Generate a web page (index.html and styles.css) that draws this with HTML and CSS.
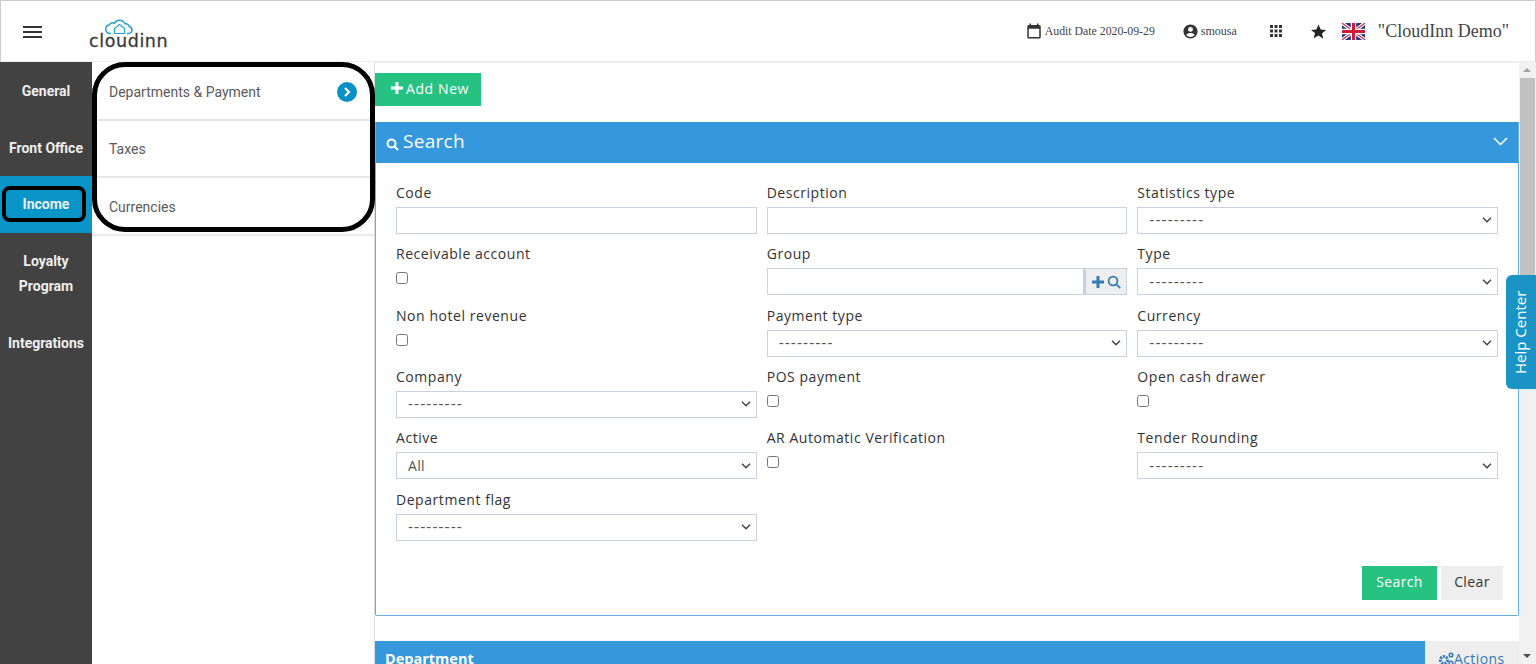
FILE: index.html
```html
<!DOCTYPE html>
<html>
    <head>
        <meta charset="utf-8">
        <title>CloudInn</title>
        <link rel="stylesheet" href="styles.css">
    </head>
    <body>
        <header class="topbar">
            <div class="menu-btn"><span></span><span></span><span></span></div>
            <div class="logo">
                <svg class="logo-cloud" width="29" height="16" viewBox="0 0 29 16" fill="none" stroke="#2a9fd6" stroke-width="1.5">
                    <path d="M6 14.500H5a4.300 4.300 0 0 1-.8-8.500 4 4 0 0 1 5.300-1.800A5.800 5.800 0 0 1 20 4.800a4 4 0 0 1 4.200 2.600 3.600 3.600 0 0 1-.7 7.100H22"/>
                    <path d="M9.500 9.500l5-4 5 4v5h-10z" stroke-width="1.200"/>
                </svg>
                <span class="logo-text">cloudinn</span>
            </div>
            <div class="top-right">
                <svg class="ico-cal" width="18" height="18" viewBox="0 0 24 24" fill="#333"><path d="M19 4h-1V2h-2v2H8V2H6v2H5a2 2 0 0 0-2 2v14a2 2 0 0 0 2 2h14a2 2 0 0 0 2-2V6a2 2 0 0 0-2-2zm0 16H5V9h14v11z"/></svg>
                <span class="audit">Audit Date 2020-09-29</span>
                <svg class="ico-user" width="17" height="17" viewBox="0 0 24 24" fill="#333"><path d="M12 2a10 10 0 1 0 0 20 10 10 0 0 0 0-20zm0 3.500a3.500 3.500 0 1 1 0 7 3.500 3.500 0 0 1 0-7zm0 14.200a7.700 7.700 0 0 1-6-2.900c1-1.700 3.900-2.600 6-2.600s5 .9 6 2.600a7.700 7.700 0 0 1-6 2.900z"/></svg>
                <span class="user">smousa</span>
                <svg class="ico-grid" width="12" height="12" viewBox="0 0 12 12" fill="#333">
                    <rect x="0" y="0" width="3" height="3"/><rect x="4.500" y="0" width="3" height="3"/><rect x="9" y="0" width="3" height="3"/>
                    <rect x="0" y="4.500" width="3" height="3"/><rect x="4.500" y="4.500" width="3" height="3"/><rect x="9" y="4.500" width="3" height="3"/>
                    <rect x="0" y="9" width="3" height="3"/><rect x="4.500" y="9" width="3" height="3"/><rect x="9" y="9" width="3" height="3"/>
                </svg>
                <svg class="ico-star" width="15" height="15" viewBox="0 0 24 24" fill="#222"><path d="M12 .8l3.500 7.900 8.500.8-6.400 5.700 1.900 8.400L12 18.200l-7.500 4.400 1.900-8.400L0 9.500l8.500-.8z"/></svg>
                <svg class="ico-flag" width="23" height="17" viewBox="0 0 60 44">
                    <rect width="60" height="44" fill="#1f2f78"/>
                    <path d="M0 0L60 44M60 0L0 44" stroke="#fff" stroke-width="9"/>
                    <path d="M0 0L60 44M60 0L0 44" stroke="#cf1b3a" stroke-width="3"/>
                    <path d="M30 0V44M0 22H60" stroke="#fff" stroke-width="14"/>
                    <path d="M30 0V44M0 22H60" stroke="#cf1b3a" stroke-width="8"/>
                </svg>
                <span class="hotel">"CloudInn Demo"</span>
            </div>
        </header>

        <div class="main">
            <nav class="side">
                <a class="side-item">General</a>
                <a class="side-item">Front Office</a>
                <a class="side-item active">Income</a>
                <a class="side-item two-line">Loyalty Program</a>
                <a class="side-item">Integrations</a>
            </nav>

            <div class="submenu">
                <a class="sub-item">Departments &amp; Payment
                    <span class="sub-arrow">
                        <svg width="10" height="10" viewBox="0 0 10 10" fill="none" stroke="#fff" stroke-width="2.200"><path d="M3 1l4 4-4 4"/></svg>
                    </span>
                </a>
                <a class="sub-item">Taxes</a>
                <a class="sub-item">Currencies</a>
            </div>

            <div class="content">
                <button class="btn-add" type="button">
                    <svg width="12" height="12" viewBox="0 0 12 12" fill="#fff"><path d="M4.500 0h3v4.500H12v3H7.500V12h-3V7.500H0v-3h4.500z"/></svg>Add New
                </button>

                <section class="panel">
                    <div class="panel-head">
                        <svg class="panel-ico" width="13" height="13" viewBox="0 0 13 13" fill="none" stroke="#fff" stroke-width="2"><circle cx="5.500" cy="5.500" r="4"/><path d="M8.500 8.500l3.500 3.500"/></svg>
                        <span>Search</span>
                        <svg class="panel-chev" width="15" height="9" viewBox="0 0 15 9" fill="none" stroke="#fff" stroke-width="1.500"><path d="M1 1l6.500 6.500L14 1"/></svg>
                    </div>
                    <form class="search-form">
                        <div class="field"><label>Code</label><input type="text"></div>
                        <div class="field"><label>Description</label><input type="text"></div>
                        <div class="field"><label>Statistics type</label><select class="empty"><option>---------</option></select></div>

                        <div class="field"><label>Receivable account</label><input type="checkbox"></div>
                        <div class="field"><label>Group</label>
                            <div class="input-group">
                                <input type="text">
                                <span class="addon">
                                    <svg width="12" height="12" viewBox="0 0 12 12" fill="#337ab7"><path d="M4.500 0h3v4.500H12v3H7.500V12h-3V7.500H0v-3h4.500z"/></svg>
                                    <svg width="14" height="14" viewBox="0 0 14 14" fill="none" stroke="#337ab7" stroke-width="1.800"><circle cx="6" cy="6" r="4.400"/><path d="M9.200 9.200l4 4"/></svg>
                                </span>
                            </div>
                        </div>
                        <div class="field"><label>Type</label><select class="empty"><option>---------</option></select></div>

                        <div class="field"><label>Non hotel revenue</label><input type="checkbox"></div>
                        <div class="field"><label>Payment type</label><select class="empty"><option>---------</option></select></div>
                        <div class="field"><label>Currency</label><select class="empty"><option>---------</option></select></div>

                        <div class="field"><label>Company</label><select class="empty"><option>---------</option></select></div>
                        <div class="field"><label>POS payment</label><input type="checkbox"></div>
                        <div class="field"><label>Open cash drawer</label><input type="checkbox"></div>

                        <div class="field"><label>Active</label><select><option>All</option></select></div>
                        <div class="field"><label>AR Automatic Verification</label><input type="checkbox"></div>
                        <div class="field"><label>Tender Rounding</label><select class="empty"><option>---------</option></select></div>

                        <div class="field"><label>Department flag</label><select class="empty"><option>---------</option></select></div>
                    </form>
                    <div class="form-actions">
                        <button class="btn-search" type="button">Search</button>
                        <button class="btn-clear" type="button">Clear</button>
                    </div>
                </section>

                <div class="dept-head">
                    <span class="dept-title">Department</span>
                    <span class="dept-actions">
                        <svg width="16" height="14" viewBox="0 0 16 14" fill="none" stroke="#337ab7"><circle cx="6" cy="8" r="3.500" stroke-width="3" stroke-dasharray="2 1"/><circle cx="13" cy="3" r="1.800" stroke-width="1.500"/><circle cx="13" cy="11" r="1.800" stroke-width="1.500"/></svg>Actions
                    </span>
                </div>
            </div>

            <div class="scrollbar">
                <span class="scroll-up"></span>
                <span class="scroll-thumb"></span>
                <span class="scroll-down"></span>
            </div>
        </div>

        <a class="help-center">Help Center</a>
        <div class="mark mark-sub"></div>
        <div class="mark mark-income"></div>
    </body>
</html>
```

FILE: styles.css
```css
html {
    font-size: 14px;
    font-family: "Open Sans", sans-serif;
}

* {
    box-sizing: border-box;
}

body {
    margin: 0;
    height: 664px;
    overflow: hidden;
    position: relative;
    background: white;
    color: #333;
}

/* top bar */
.topbar {
    height: 62px;
    display: flex;
    align-items: center;
    border-top: 1px solid #ccc;
    border-left: 1px solid #ccc;
    border-right: 1px solid #ccc;
    border-bottom: 1px solid #eee;
    padding-left: 22px;
}

.menu-btn {
    width: 19px;
    display: flex;
    flex-direction: column;
    gap: 3px;
    margin-top: 1px;
}

.menu-btn span {
    height: 2px;
    background: #333;
}

.logo {
    margin-left: 47px;
    width: 82px;
    display: flex;
    flex-direction: column;
    align-items: flex-start;
    margin-top: 4px;
}

.logo-cloud {
    margin-left: 16px;
}

.logo-text {
    font-family: "DejaVu Sans", sans-serif;
    font-size: 17.500px;
    line-height: 13px;
    letter-spacing: 0.600px;
    color: #3a3a3a;
    -webkit-text-stroke: 0.300px #3a3a3a;
}

.top-right {
    margin-left: auto;
    display: flex;
    align-items: center;
    font-family: "Liberation Serif", serif;
    color: #444;
    padding-right: 25px;
}

.audit {
    font-size: 11.800px;
    margin-left: 2px;
}

.ico-user {
    margin-left: 27px;
}

.user {
    font-size: 12px;
    margin-left: 2px;
    margin-top: 1px;
}

.ico-grid {
    margin-left: 33px;
}

.ico-star {
    margin-left: 29px;
}

.ico-flag {
    margin-left: 16px;
}

.hotel {
    font-size: 18px;
    margin-left: 13px;
    margin-right: 1px;
}

/* main area */
.main {
    display: flex;
    height: 602px;
}

.side {
    width: 92px;
    flex-shrink: 0;
    background: #424242;
    padding-top: 1px;
    display: flex;
    flex-direction: column;
    font-family: "Roboto", sans-serif;
    font-weight: bold;
    font-size: 14px;
    color: #eee;
    text-align: center;
}

.side-item {
    height: 56.700px;
    line-height: 25px;
    padding-top: 16px;
}

.side-item.active {
    background: #0a95c9;
}

.side-item.two-line {
    height: 81.700px;
    padding-left: 12px;
    padding-right: 12px;
}

.submenu {
    width: 283px;
    flex-shrink: 0;
    padding-top: 1px;
    font-family: "Roboto", sans-serif;
    font-size: 14px;
    color: #5a5a5a;
    border-right: 1px solid #ddd;
}

.sub-item {
    height: 57.700px;
    display: flex;
    align-items: center;
    justify-content: space-between;
    padding: 1.400px 17px 0;
    border-bottom: 2px solid #e8e8e8;
}

.sub-arrow {
    width: 20px;
    height: 20px;
    border-radius: 50%;
    background: #0a8fc6;
    display: flex;
    align-items: center;
    justify-content: center;
}

/* content */
.content {
    flex: 1;
    min-width: 0;
    overflow: hidden;
    border-top: 1px solid #eee;
}

.btn-add {
    display: flex;
    align-items: center;
    gap: 3px;
    height: 33px;
    width: 106px;
    margin-top: 10px;
    padding: 0 0 3px 16px;
    border: 0;
    background: #26c281;
    color: white;
    font-family: inherit;
    font-size: 14px;
    letter-spacing: 0.600px;
}

.panel {
    margin-top: 16px;
    height: 494px;
    border: 1px solid #67aee8;
    border-top: 0;
    border-radius: 0 0 2px 2px;
}

.panel-head {
    height: 41px;
    background: #3598dc;
    color: white;
    display: flex;
    align-items: center;
    gap: 4px;
    font-size: 19px;
    letter-spacing: 0.300px;
    padding: 0 10px 3px;
}

.panel-ico {
    margin-top: 6px;
}

.panel-chev {
    margin-left: auto;
    margin-top: 1px;
}

.search-form {
    display: grid;
    grid-template-columns: repeat(3, 1fr);
    grid-auto-rows: 61.420px;
    column-gap: 10px;
    padding: 19.700px 20px 0;
}

.field label {
    display: block;
    font-size: 14px;
    line-height: 19px;
    letter-spacing: 0.550px;
    margin-bottom: 5px;
}

.field input[type="text"],
.field select {
    display: block;
    width: 100%;
    height: 27px;
    border: 1px solid #c9d0e3;
    background-color: white;
    font-family: inherit;
    font-size: 14px;
    color: #555;
    letter-spacing: 0.350px;
    padding: 0 11px;
}

.field select {
    appearance: none;
    background-image: url("data:image/svg+xml,%3Csvg xmlns='http://www.w3.org/2000/svg' width='10' height='6' fill='none' stroke='%23444' stroke-width='1.500'%3E%3Cpath d='M1 .8l4 4 4-4'/%3E%3C/svg%3E");
    background-repeat: no-repeat;
    background-position: right 5px center;
}

.field select.empty {
    font-family: "DejaVu Sans", sans-serif;
    letter-spacing: 1.050px;
}

.field input[type="checkbox"] {
    display: block;
    width: 12px;
    height: 12px;
    margin: 9px 0 0;
}

.input-group {
    display: flex;
}

.field .input-group input {
    flex: 1;
    min-width: 0;
}

.addon {
    width: 43px;
    height: 27px;
    flex-shrink: 0;
    background: #eee;
    border: 1px solid #c9d0e3;
    border-left: 2px solid #c9d0e3;
    display: flex;
    align-items: center;
    justify-content: center;
    gap: 3px;
}

.form-actions {
    display: flex;
    justify-content: flex-end;
    gap: 4px;
    margin-top: 15px;
    padding-right: 15px;
}

.form-actions button {
    height: 34px;
    border: 0;
    padding: 0 0 4px;
    font-family: inherit;
    font-size: 14px;
    letter-spacing: 0.400px;
}

.btn-search {
    width: 75px;
    background: #26c281;
    color: white;
}

.btn-clear {
    width: 62px;
    background: #eee;
    color: #333;
}

.dept-head {
    margin-top: 25px;
    height: 40px;
    display: flex;
    background: #3598dc;
    color: white;
}

.dept-title {
    font-weight: bold;
    font-size: 14.500px;
    padding: 8px 10px;
}

.dept-actions {
    margin-left: auto;
    width: 94px;
    background: #eee;
    color: #337ab7;
    padding: 8px 0 0 13px;
    display: flex;
    align-items: flex-start;
    font-size: 14px;
    letter-spacing: 0.400px;
}

.dept-actions svg {
    margin-top: 3px;
}

/* scrollbar of the page */
.scrollbar {
    width: 17px;
    flex-shrink: 0;
    background: #f1f1f1;
    position: relative;
}

.scroll-thumb {
    position: absolute;
    top: 16px;
    left: 1px;
    width: 15px;
    height: 300px;
    background: #c1c1c1;
}

.scroll-up,
.scroll-down {
    position: absolute;
    left: 4px;
    width: 0;
    height: 0;
    border-left: 4px solid transparent;
    border-right: 4px solid transparent;
}

.scroll-up {
    top: 6px;
    border-bottom: 4px solid #a3a3a3;
}

.scroll-down {
    bottom: 6px;
    border-top: 4px solid #505050;
}

/* things lying over the page */
.help-center {
    position: absolute;
    left: 1506px;
    top: 275px;
    width: 30px;
    height: 114px;
    background: #1a94c4;
    color: white;
    font-size: 15px;
    writing-mode: vertical-rl;
    transform: rotate(180deg);
    border-radius: 0 6px 6px 0;
    text-align: center;
    line-height: 29px;
}

.mark {
    position: absolute;
    border-style: solid;
    border-color: black;
}

.mark-sub {
    left: 92px;
    top: 62px;
    width: 283px;
    height: 170px;
    border-width: 5px;
    border-radius: 33px;
}

.mark-income {
    left: 2px;
    top: 186px;
    width: 84px;
    height: 36px;
    border-width: 4.500px;
    border-radius: 8px;
}
```
